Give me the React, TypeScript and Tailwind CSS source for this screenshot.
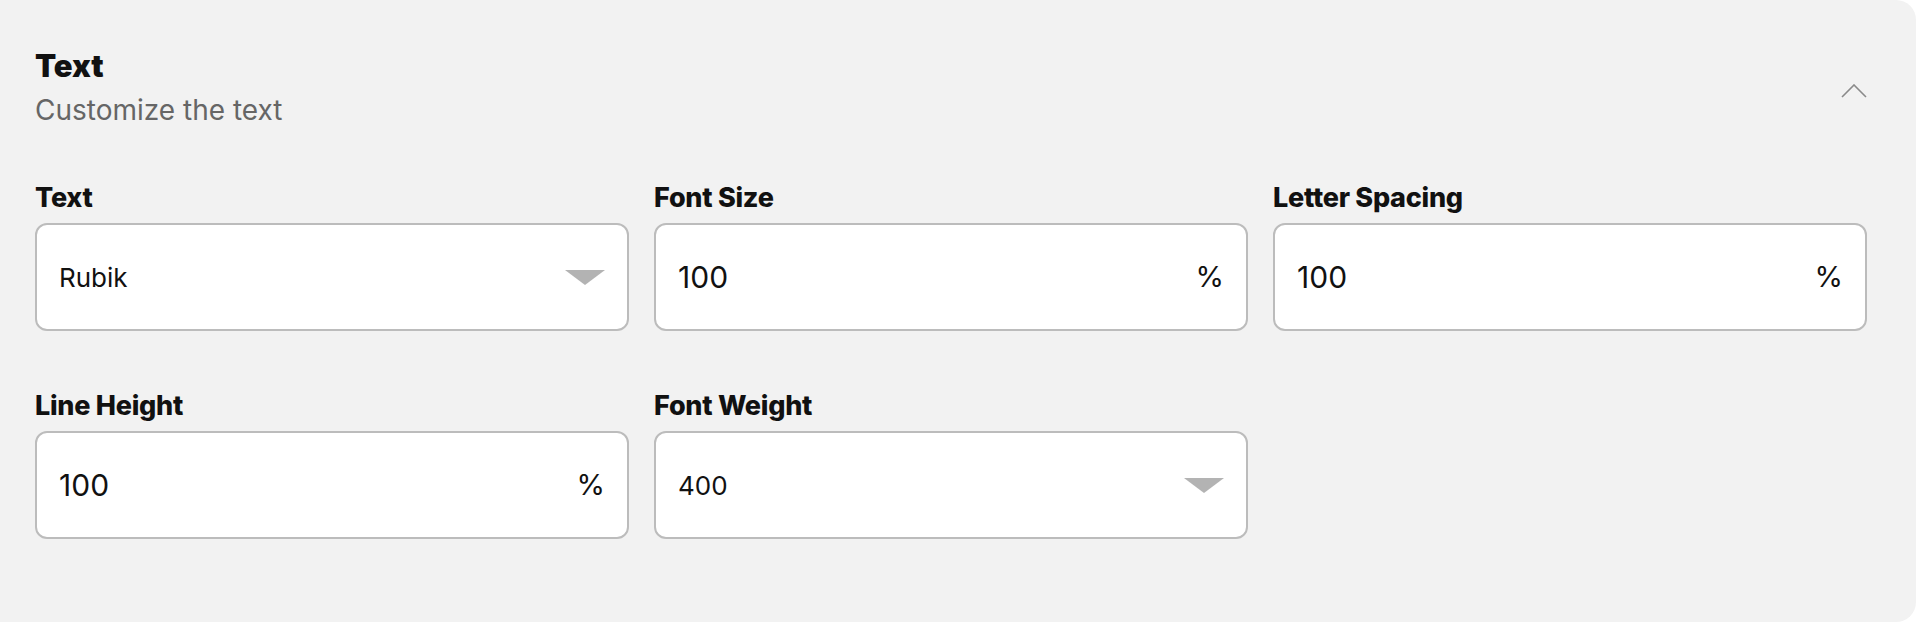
import { ReactNode } from "react";

type Field = {
  label: string;
  value: string;
  kind: "select" | "percent";
};

const fields: Field[] = [
  { label: "Text", value: "Rubik", kind: "select" },
  { label: "Font Size", value: "100", kind: "percent" },
  { label: "Letter Spacing", value: "100", kind: "percent" },
  { label: "Line Height", value: "100", kind: "percent" },
  { label: "Font Weight", value: "400", kind: "select" },
];

const Caret = () => (
  <svg width="40" height="15" viewBox="0 0 40 15" className="shrink-0">
    <path d="M0 0 L40 0 L20 15 Z" fill="#b3b3b3" />
  </svg>
);

const Box = ({ children }: { children: ReactNode }) => (
  <div className="h-[108px] bg-white border-2 border-[#bcbcbc] rounded-[12px] flex items-center justify-between pl-[22px] pr-[22px]">
    {children}
  </div>
);

const FieldCell = ({ field }: { field: Field }) => (
  <div className="flex flex-col">
    <label className="text-[27px] leading-[33px] font-extrabold tracking-[-0.01em] text-[#111] mb-[9px]">
      {field.label}
    </label>
    {field.kind === "select" ? (
      <Box>
        <span className="text-[26px] text-[#111]">{field.value}</span>
        <Caret />
      </Box>
    ) : (
      <Box>
        <span className="text-[30px] text-[#111]">{field.value}</span>
        <span className="text-[29px] text-[#111]">%</span>
      </Box>
    )}
  </div>
);

const App = () => {
  return (
    <div className="min-h-[622px] bg-white" style={{ fontFamily: "Inter, 'Noto Sans', sans-serif" }}>
      <div className="h-[622px] bg-[#f2f2f2] rounded-r-[20px] pt-[47px] pl-[35px] pr-[49px]">
        <div className="flex justify-between items-center">
          <div>
            <h2 className="text-[31px] leading-[38px] font-black text-[#111]">Text</h2>
            <p className="text-[28px] leading-[33px] text-[#666] mt-[9px]">Customize the text</p>
          </div>
          <svg width="26" height="14" viewBox="0 0 26 14" className="mt-[7px]">
            <path d="M1 13 L13 1 L25 13" fill="none" stroke="#8a8a8a" strokeWidth="1.6" />
          </svg>
        </div>

        <div className="grid grid-cols-3 gap-x-[25px] gap-y-[58px] mt-[54px]">
          {fields.map((f) => (
            <FieldCell key={f.label} field={f} />
          ))}
        </div>
      </div>
    </div>
  );
};

export default App;
